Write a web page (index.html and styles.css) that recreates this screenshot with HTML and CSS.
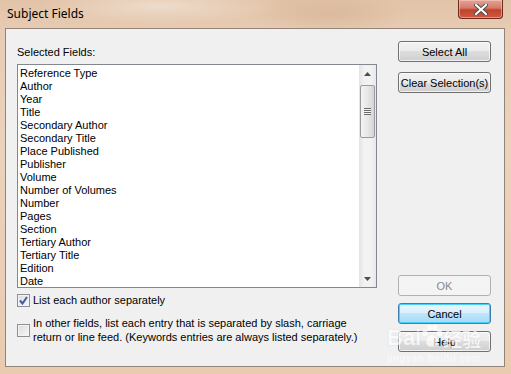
FILE: index.html
```html
<!DOCTYPE html>
<html lang="en">
<head>
    <meta charset="UTF-8">
    <title>Subject Fields</title>
    <link rel="stylesheet" href="styles.css">
</head>
<body>
    <div class="window">
        <div class="titlebar">
            <span class="title">Subject Fields</span>
            <button class="close-button">
                <svg width="14" height="11" viewBox="0 0 14 11">
                    <path d="M2 1 L12 10 M12 1 L2 10" stroke="#4a4a4a" stroke-width="4" stroke-linecap="round"/>
                    <path d="M2 1 L12 10 M12 1 L2 10" stroke="#fff" stroke-width="2.2" stroke-linecap="round"/>
                </svg>
            </button>
        </div>

        <div class="client">
            <div class="left-column">
                <div class="field-label">Selected Fields:</div>
                <div class="listbox">
                    <ul class="list-items">
                        <li>Reference Type</li>
                        <li>Author</li>
                        <li>Year</li>
                        <li>Title</li>
                        <li>Secondary Author</li>
                        <li>Secondary Title</li>
                        <li>Place Published</li>
                        <li>Publisher</li>
                        <li>Volume</li>
                        <li>Number of Volumes</li>
                        <li>Number</li>
                        <li>Pages</li>
                        <li>Section</li>
                        <li>Tertiary Author</li>
                        <li>Tertiary Title</li>
                        <li>Edition</li>
                        <li>Date</li>
                    </ul>
                    <div class="scrollbar">
                        <div class="scroll-arrow">
                            <svg width="7" height="4" viewBox="0 0 7 4"><path d="M0 4 L3.5 0 L7 4 Z" fill="#4d4d4d"/></svg>
                        </div>
                        <div class="scroll-track">
                            <div class="scroll-thumb">
                                <span class="grip"></span>
                            </div>
                        </div>
                        <div class="scroll-arrow">
                            <svg width="7" height="4" viewBox="0 0 7 4"><path d="M0 0 L3.5 4 L7 0 Z" fill="#4d4d4d"/></svg>
                        </div>
                    </div>
                </div>

                <label class="check-row">
                    <span class="checkbox checked">
                        <svg width="9" height="9" viewBox="0 0 9 9"><path d="M1 4.5 L3.5 7.5 L8 1" fill="none" stroke="#3a5fa5" stroke-width="2"/></svg>
                    </span>
                    <span>List each author separately</span>
                </label>

                <label class="check-row multi">
                    <span class="checkbox"></span>
                    <span>In other fields, list each entry that is separated by slash, carriage<br>return or line feed. (Keywords entries are always listed separately.)</span>
                </label>
            </div>

            <div class="right-column">
                <button class="dlg-button">Select All</button>
                <button class="dlg-button second">Clear Selection(s)</button>
                <button class="dlg-button disabled push-down">OK</button>
                <button class="dlg-button default">Cancel</button>
                <button class="dlg-button">Help</button>
            </div>
        </div>

        <!-- watermark from the original capture -->
        <div class="watermark">
            <div class="wm-logo">
                <span class="wm-bai">Bai</span>
                <svg class="wm-paw" width="22" height="26" viewBox="0 0 22 24">
                    <ellipse cx="4" cy="9" rx="2.6" ry="3.2" fill="#fff"/>
                    <ellipse cx="8.5" cy="4" rx="2.6" ry="3.2" fill="#fff"/>
                    <ellipse cx="14" cy="4" rx="2.6" ry="3.2" fill="#fff"/>
                    <ellipse cx="18.5" cy="9" rx="2.6" ry="3.2" fill="#fff"/>
                    <path d="M11 11 C6 11 4 18 6 21 C8 23 14 23 16 21 C18 18 16 11 11 11 Z" fill="#fff"/>
                </svg>
                <span class="wm-cn">经验</span>
            </div>
            <div class="wm-url">jingyan.baidu.com</div>
        </div>
    </div>
</body>
</html>
```

FILE: styles.css
```css
body {
    margin: 0;
    font-family: 'Liberation Sans', Arial, sans-serif;
    font-size: 11px;
    color: #000;
}

.window {
    position: relative;
    width: 511px;
    height: 374px;
    display: flex;
    flex-direction: column;
    overflow: hidden;
    background:
        radial-gradient(ellipse 120px 18px at 160px 6px, rgba(240, 225, 210, 0.8), rgba(240, 225, 210, 0) 100%),
        radial-gradient(ellipse 80px 20px at 330px 14px, rgba(200, 160, 130, 0.35), rgba(200, 160, 130, 0) 100%),
        linear-gradient(to bottom, #e2c3a8 0%, #e8cdb5 10%, #ebd2bc 40%, #e9cbb0 100%);
}

.titlebar {
    height: 28px;
    display: flex;
    align-items: flex-start;
    padding-left: 7px;
    box-sizing: border-box;
}

.title {
    font-family: 'Noto Sans', 'Open Sans', sans-serif;
    font-size: 12px;
    line-height: 14px;
    margin-top: 7px;
    color: #000;
}

.close-button {
    margin-left: auto;
    margin-right: 8px;
    width: 45px;
    height: 19px;
    padding: 0;
    border: 1px solid #6b2b22;
    border-top: none;
    border-radius: 0 0 4px 4px;
    background: linear-gradient(to bottom, #e3a597 0%, #d47a68 45%, #c2412b 55%, #cf5a3f 100%);
    box-shadow: inset 0 0 0 1px rgba(255, 210, 200, 0.5);
    display: flex;
    align-items: center;
    justify-content: center;
}

.client {
    flex: 1;
    margin: 0 6px 7px 5px;
    background-color: #f0f0f0;
    border: 1px solid #93847a;
    display: flex;
}

.left-column {
    padding: 17px 0 0 11px;
    width: 360px;
}

.field-label {
    line-height: 13px;
    margin-bottom: 5px;
}

.listbox {
    height: 224px;
    box-sizing: border-box;
    border: 1px solid #828790;
    background-color: #fff;
    display: flex;
}

.list-items {
    flex: 1;
    list-style: none;
    margin: 0;
    padding: 2px 0 0 2px;
    overflow: hidden;
}

.list-items li {
    line-height: 13px;
    height: 13px;
    white-space: nowrap;
}

.scrollbar {
    width: 17px;
    display: flex;
    flex-direction: column;
    background: linear-gradient(to right, #e3e3e3, #f2f2f2 30%, #f2f2f2 70%, #e8e8e8);
}

.scroll-arrow {
    height: 17px;
    display: flex;
    align-items: center;
    justify-content: center;
}

.scroll-track {
    flex: 1;
    padding-top: 3px;
}

.scroll-thumb {
    margin: 0 1px;
    height: 53px;
    box-sizing: border-box;
    border: 1px solid #9b9b9b;
    border-radius: 2px;
    background: linear-gradient(to right, #f3f3f3, #e8e8e8 50%, #d5d5d5);
    display: flex;
    align-items: center;
    justify-content: center;
}

.grip {
    width: 7px;
    height: 7px;
    background: repeating-linear-gradient(to bottom, #6a6a6a 0, #6a6a6a 1px, #f5f5f5 1px, #f5f5f5 2px);
}

.check-row {
    display: flex;
    align-items: center;
    gap: 3px;
    line-height: 13px;
    margin-top: 6px;
}

.check-row.multi {
    margin-top: 9px;
    line-height: 14px;
}

.checkbox {
    width: 13px;
    height: 13px;
    box-sizing: border-box;
    border: 1px solid #8e8f8f;
    background: linear-gradient(135deg, #dcdcdc, #f6f6f6);
    box-shadow: inset 0 0 0 1px #f4f4f4;
    display: flex;
    align-items: center;
    justify-content: center;
    flex-shrink: 0;
}

.right-column {
    margin-left: 21px;
    padding: 12px 0 14px 0;
    display: flex;
    flex-direction: column;
}

.dlg-button {
    width: 93px;
    height: 21px;
    padding: 0;
    font-family: 'Liberation Sans', Arial, sans-serif;
    font-size: 11px;
    color: #000;
    border: 1px solid #707070;
    border-radius: 3px;
    background: linear-gradient(to bottom, #f2f2f2 0%, #ebebeb 50%, #dddddd 50%, #cfcfcf 100%);
    box-shadow: inset 0 0 0 1px rgba(255, 255, 255, 0.7);
}

.dlg-button + .dlg-button {
    margin-top: 7px;
}

.dlg-button.second {
    margin-top: 10px;
}

.dlg-button.push-down {
    margin-top: auto;
}

.dlg-button.disabled {
    color: #8a8a8a;
    border-color: #adb2b5;
    background: #f4f4f4;
    box-shadow: none;
}

.dlg-button.default {
    border-color: #3c7fb1;
    background: linear-gradient(to bottom, #eaf6fd 0%, #d9f0fc 50%, #bee6fd 50%, #a7d9f5 100%);
    box-shadow: inset 0 0 0 1px #48d2fb;
}

.watermark {
    position: absolute;
    left: 387px;
    top: 324px;
    opacity: 0.7;
    pointer-events: none;
}

.wm-logo {
    display: flex;
    align-items: center;
    height: 28px;
}

.wm-bai {
    font-family: 'Liberation Sans', Arial, sans-serif;
    font-weight: bold;
    font-size: 22px;
    color: #fff;
    text-shadow: 0 0 1px #bdbdbd;
}

.wm-paw {
    margin: -4px 0 0 0;
}

.wm-cn {
    font-family: 'Noto Sans CJK SC', sans-serif;
    font-size: 19px;
    font-weight: bold;
    color: #fff;
    text-shadow: 0 0 1px #bdbdbd;
}

.wm-url {
    font-family: 'Liberation Sans', Arial, sans-serif;
    font-size: 10px;
    line-height: 11px;
    color: #fff;
    margin-top: 1px;
    letter-spacing: 0.8px;
}
```
